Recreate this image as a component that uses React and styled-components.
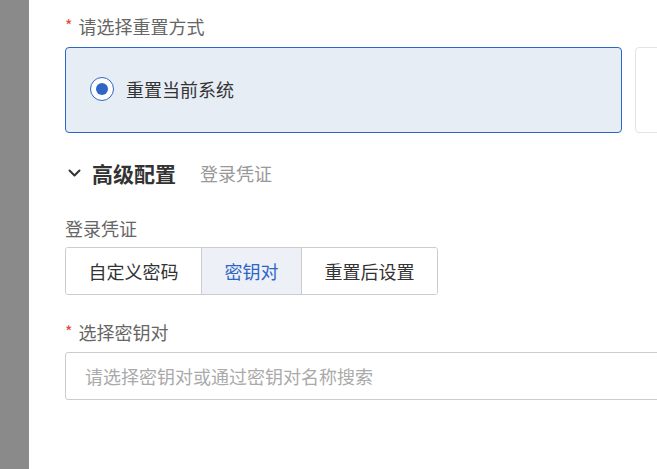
import React from 'react';
import styled, { createGlobalStyle } from 'styled-components';

const GlobalStyle = createGlobalStyle`
    html, body {
        margin: 0;
        padding: 0;
        height: 100%;
        overflow: hidden;
        background: #ffffff;
    }
    body {
        font-family: "Noto Sans CJK SC", "Noto Sans", sans-serif;
    }
    #root {
        height: 100%;
    }
`;

const Page = styled.div`
    display: flex;
    height: 469px;
    width: 657px;
    overflow: hidden;
`;

const Backdrop = styled.div`
    flex: 0 0 29px;
    background: #8a8a8a;
`;

const Panel = styled.div`
    flex: 1;
    min-width: 0;
    background: #ffffff;
    padding: 14px 0 0 36px;
    overflow: hidden;
`;

const Label = styled.div`
    display: flex;
    align-items: center;
    height: 24px;
    font-size: 18px;
    color: #666666;
    margin-top: ${p => p.$top || 0}px;
    margin-bottom: ${p => p.$bottom || 7}px;
    white-space: nowrap;
`;

const Star = styled.span`
    color: #e2483d;
    font-size: 16px;
    margin-right: 6px;
    position: relative;
    top: -1px;
`;

const Cards = styled.div`
    display: grid;
    grid-template-columns: 557px 557px;
    gap: 13px;
`;

const Card = styled.div`
    box-sizing: border-box;
    height: 86px;
    display: flex;
    align-items: center;
    padding: 0 0 2px 24px;
    gap: 12px;
    border-radius: 4px;
    border: 1px solid ${p => (p.$active ? '#2f66c6' : '#e4e4e4')};
    background: ${p => (p.$active ? '#e6edf5' : '#ffffff')};
    font-size: 18px;
    color: #333333;
    white-space: nowrap;
`;

const Radio = styled.span`
    box-sizing: border-box;
    width: 24px;
    height: 24px;
    border-radius: 50%;
    border: 1.5px solid #2f66c6;
    background: #ffffff;
    display: flex;
    align-items: center;
    justify-content: center;
    &::after {
        content: '';
        width: 12px;
        height: 12px;
        border-radius: 50%;
        background: #2f66c6;
    }
`;

const Section = styled.div`
    display: flex;
    align-items: center;
    height: 24px;
    margin-top: 28px;
    white-space: nowrap;
`;

const Chevron = styled.svg`
    width: 13px;
    height: 8px;
    margin-left: 3px;
    margin-right: 11px;
`;

const SectionTitle = styled.span`
    font-size: 21px;
    font-weight: 700;
    color: #333333;
`;

const SectionHint = styled.span`
    font-size: 18px;
    color: #999999;
    margin-left: 24px;
`;

const Segmented = styled.div`
    display: inline-flex;
    box-sizing: border-box;
    height: 48px;
    border: 1px solid #cccccc;
    border-radius: 3px;
    overflow: hidden;
`;

const Segment = styled.div`
    display: flex;
    align-items: center;
    padding: 0 22.5px;
    font-size: 18px;
    white-space: nowrap;
    color: ${p => (p.$active ? '#2f66c6' : '#333333')};
    background: ${p => (p.$active ? '#edf1f7' : '#ffffff')};
    & + & {
        border-left: 1px solid #cccccc;
    }
`;

const Select = styled.div`
    box-sizing: border-box;
    height: 48px;
    width: 620px;
    border: 1px solid #cccccc;
    border-radius: 3px;
    display: flex;
    align-items: center;
    padding-left: 19px;
    font-size: 18px;
    color: #aaaaaa;
    white-space: nowrap;
`;

const App = () => {
    const modes = ['自定义密码', '密钥对', '重置后设置'];
    return (
        <Page>
            <GlobalStyle />
            <Backdrop />
            <Panel>
                <Label $bottom={9}>
                    <Star>*</Star>请选择重置方式
                </Label>
                <Cards>
                    <Card $active>
                        <Radio />
                        重置当前系统
                    </Card>
                    <Card />
                </Cards>

                <Section>
                    <Chevron viewBox="0 0 13 8">
                        <path d="M1.5 1.5 L6.5 6.5 L11.5 1.5" fill="none" stroke="#333" strokeWidth="2" strokeLinecap="round" strokeLinejoin="round" />
                    </Chevron>
                    <SectionTitle>高级配置</SectionTitle>
                    <SectionHint>登录凭证</SectionHint>
                </Section>

                <Label $top={31}>登录凭证</Label>
                <Segmented>
                    {modes.map(m => (
                        <Segment key={m} $active={m === '密钥对'}>{m}</Segment>
                    ))}
                </Segmented>

                <Label $top={25} $bottom={8}>
                    <Star>*</Star>选择密钥对
                </Label>
                <Select>请选择密钥对或通过密钥对名称搜索</Select>
            </Panel>
        </Page>
    );
};

export default App;
